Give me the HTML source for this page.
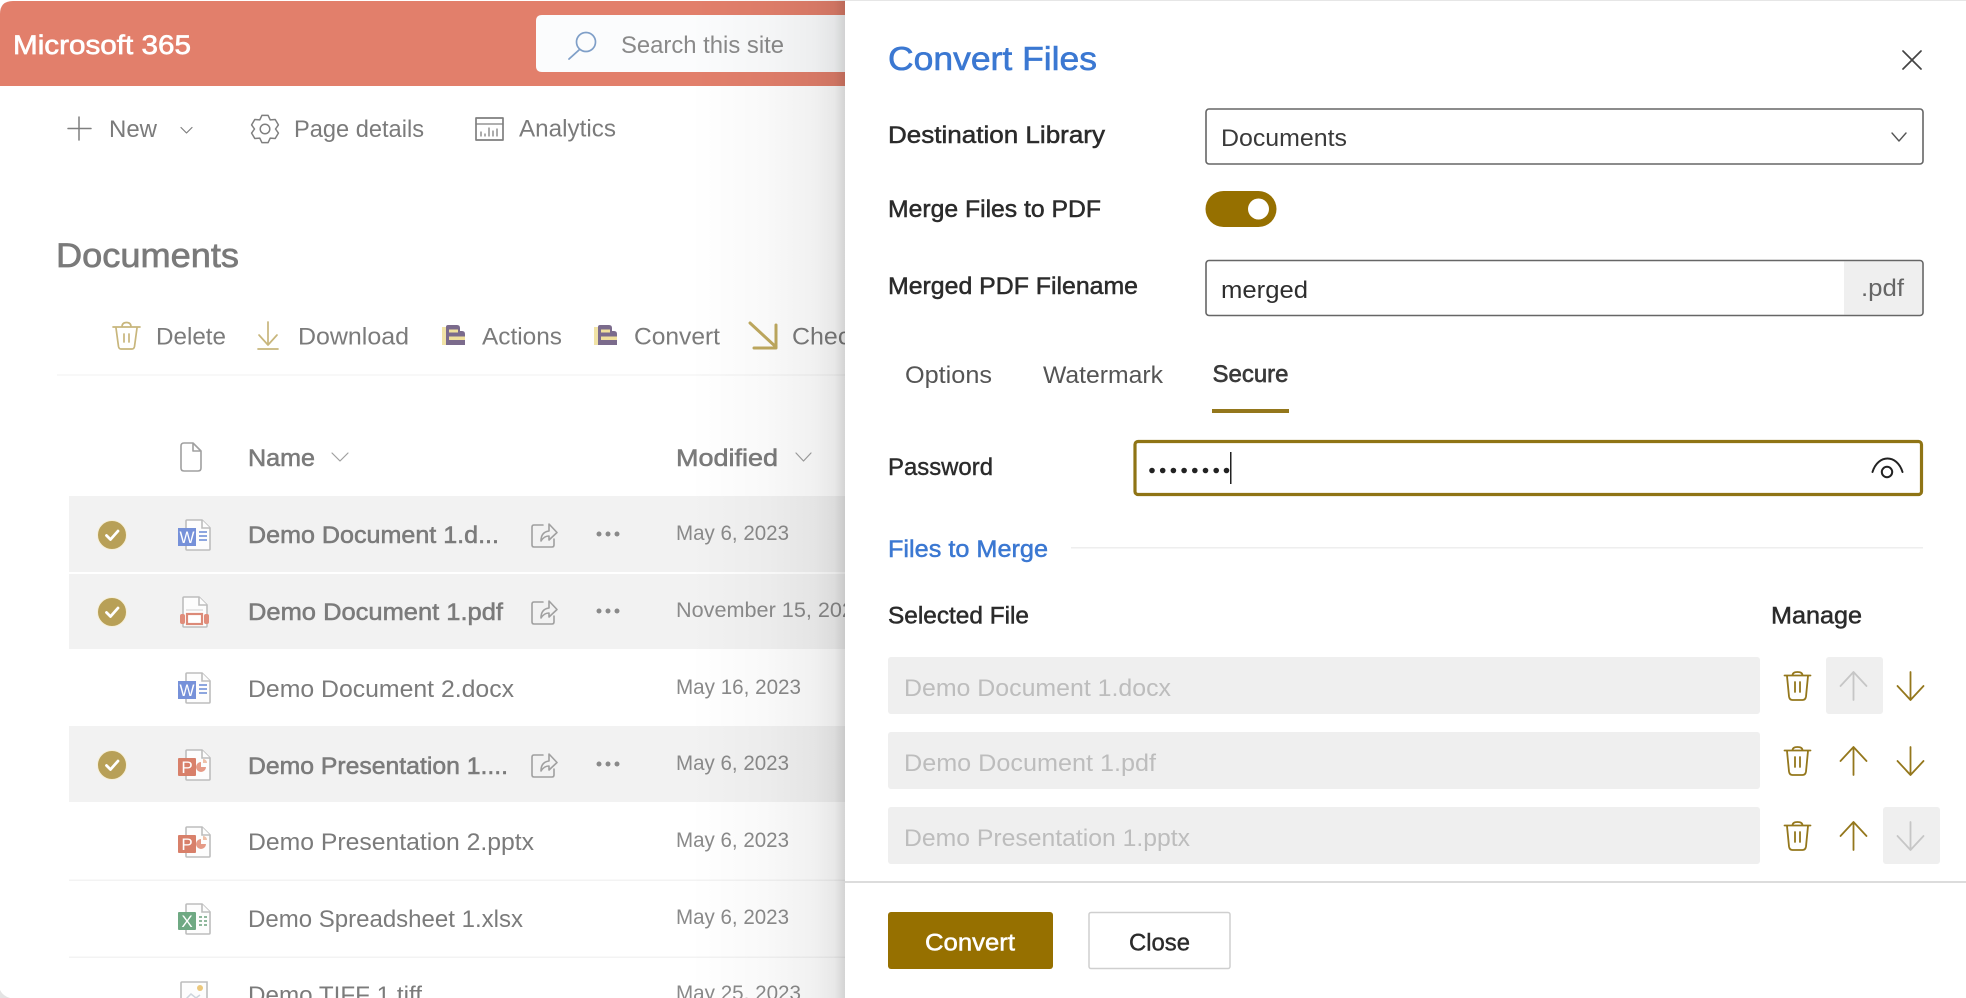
<!DOCTYPE html>
<html lang="en">
<head>
<meta charset="utf-8">
<title>Convert Files</title>
<style>
html,body{margin:0;padding:0;background:#fff;width:1966px;height:998px;overflow:hidden}
svg{display:block;font-family:"Liberation Sans",sans-serif;filter:blur(.3px)}
text{white-space:pre}
.t{fill:#7b7b7b;font-size:24px}
.s{stroke:#7b7b7b;stroke-width:.55px}
.d{fill:#8a8a8a;font-size:21px}
.l{fill:#2b2b2b;font-size:24px;stroke:#2b2b2b;stroke-width:.5px}
.g{fill:#bdbdbd;font-size:24px}
.paper{fill:#fdfdfd;stroke:#bdbdbd;stroke-width:1.6}
.ico{fill:none;stroke:#94771c;stroke-width:1.8;stroke-linecap:round;stroke-linejoin:round}
.off{fill:none;stroke:#c6c6c6;stroke-width:1.8;stroke-linecap:round;stroke-linejoin:round}
.tan{fill:none;stroke:#c8b67c;stroke-width:1.7;stroke-linecap:round;stroke-linejoin:round}
.gr{fill:none;stroke:#7f7f7f;stroke-width:1.5;stroke-linecap:round;stroke-linejoin:round}
.lg{fill:none;stroke:#a0a0a0;stroke-width:1.6;stroke-linecap:round;stroke-linejoin:round}
</style>
</head>
<body>
<svg width="1966" height="998" viewBox="0 0 1966 998" xmlns="http://www.w3.org/2000/svg">
<defs>
<linearGradient id="sh" x1="0" x2="1" y1="0" y2="0">
<stop offset="0" stop-color="#000" stop-opacity="0"/>
<stop offset=".5" stop-color="#000" stop-opacity=".025"/>
<stop offset=".8" stop-color="#000" stop-opacity=".055"/>
<stop offset=".93" stop-color="#000" stop-opacity=".09"/>
<stop offset="1" stop-color="#000" stop-opacity=".17"/>
</linearGradient>
</defs>
<rect width="1966" height="998" fill="#fff"/>
<path d="M0 998V990Q3 996 10 998Z" fill="#e4e4e4"/>

<!-- suite header -->
<path d="M0 86V14Q0 1 13 1H846V86Z" fill="#e27f6b"/>
<text x="13" y="54" font-size="27" fill="#fff" stroke="#fff" stroke-width=".65" textLength="178" lengthAdjust="spacingAndGlyphs">Microsoft 365</text>
<path d="M536 21q0-6 6-6H846V72H542q-6 0-6-6Z" fill="#fbfcfd"/>
<circle cx="586" cy="42" r="9.500" fill="none" stroke="#7f9fc8" stroke-width="1.700"/>
<path d="M579 50L569 59" fill="none" stroke="#7f9fc8" stroke-width="1.800" stroke-linecap="round"/>
<text x="621" y="53" class="t" style="fill:#8a8a8a" textLength="163" lengthAdjust="spacingAndGlyphs">Search this site</text>

<!-- command bar -->
<path d="M79 117V140M68 128.500H91" class="gr"/>
<text x="109" y="137" class="t" textLength="48" lengthAdjust="spacingAndGlyphs">New</text>
<path d="M181 127.500L186.500 133L192 127.500" class="gr" style="stroke-width:1.200"/>
<path d="M261.900 115.400L268.100 115.400L270.250 119.900L275.200 119.450L278.400 124.900L275.500 129L278.400 133.100L275.200 138.550L270.250 138.100L268.100 142.600L261.900 142.600L259.750 138.100L254.800 138.550L251.600 133.100L254.500 129L251.600 124.900L254.800 119.450L259.750 119.900Z" class="gr"/>
<circle cx="265" cy="129" r="4.800" class="gr"/>
<text x="294" y="137" class="t" textLength="130" lengthAdjust="spacingAndGlyphs">Page details</text>
<rect x="476" y="118" width="27" height="22" class="gr" style="stroke-width:1.700"/>
<path d="M476 124H503M481 136V132M485 136V134M489 136V128M493 136V131M497 136V129" class="gr" style="stroke-width:1.300"/>
<text x="519" y="136.500" class="t" textLength="97" lengthAdjust="spacingAndGlyphs">Analytics</text>

<text x="56" y="267" font-size="34" fill="#7a7a7a" stroke="#7a7a7a" stroke-width=".7" textLength="183" lengthAdjust="spacingAndGlyphs">Documents</text>

<!-- action bar -->
<path d="M113 327H140M122 327Q122 322.500 126.500 322.500Q131 322.500 131 327M116 328L118.500 346.500Q119 349 121 349H132Q134 349 134.500 346.500L137 328M124 334V342M129 334V342" class="tan"/>
<text x="156" y="344.500" class="t" textLength="70" lengthAdjust="spacingAndGlyphs">Delete</text>
<path d="M268 322V345M259 335L268 345L277 335M258 349H278" class="tan"/>
<text x="298" y="344.500" class="t" textLength="111" lengthAdjust="spacingAndGlyphs">Download</text>

<rect x="442" y="327" width="4" height="18" fill="#f1e3a6"/>
<path d="M446 327Q446 325 448 325H457Q460 325 460 328V331H462Q465 331 465 334V345H446Z" fill="#7b6b8c"/>
<rect x="449" y="329.500" width="9" height="3" fill="#f0e09c"/>
<rect x="449" y="336.500" width="16" height="3.500" fill="#f0e09c"/>
<text x="482" y="344.500" class="t" textLength="80" lengthAdjust="spacingAndGlyphs">Actions</text>
<rect x="594" y="327" width="4" height="18" fill="#f1e3a6"/>
<path d="M598 327Q598 325 600 325H609Q612 325 612 328V331H614Q617 331 617 334V345H598Z" fill="#7b6b8c"/>
<rect x="601" y="329.500" width="9" height="3" fill="#f0e09c"/>
<rect x="601" y="336.500" width="16" height="3.500" fill="#f0e09c"/>
<text x="634" y="344.500" class="t" textLength="86" lengthAdjust="spacingAndGlyphs">Convert</text>
<path d="M750 323L776 347M776 325V348M754 348H776" fill="none" stroke="#bfa95f" stroke-width="3" stroke-linecap="round"/>
<text x="792" y="344.500" class="t" textLength="118" lengthAdjust="spacingAndGlyphs">Check Out</text>
<rect x="57" y="374.500" width="790" height="1" fill="#f0f0f0"/>

<!-- list header -->
<path d="M181 446Q181 443 184 443H193L201 451V468Q201 471 198 471H184Q181 471 181 468ZM193 443V451H201" class="lg"/>
<text x="248" y="466" class="t s" textLength="67" lengthAdjust="spacingAndGlyphs">Name</text>
<path d="M332 453L340 461L348 453" class="lg" style="stroke-width:1.200"/>
<text x="676" y="466" class="t s" textLength="102" lengthAdjust="spacingAndGlyphs">Modified</text>
<path d="M796 453L803.500 461L811 453" class="lg" style="stroke-width:1.200"/>

<!-- rows -->
<rect x="69" y="496" width="780" height="76" fill="#f2f2f2"/>
<rect x="69" y="574" width="780" height="75" fill="#f2f2f2"/>
<rect x="69" y="726" width="780" height="76" fill="#f2f2f2"/>
<rect x="69" y="879.500" width="780" height="1.500" fill="#f3f3f3"/>
<rect x="69" y="956.500" width="780" height="1.500" fill="#f3f3f3"/>

<!-- check circles -->
<g fill="#b8a057" stroke="#f6efd8" stroke-width="1">
<circle cx="112" cy="535" r="14.500"/><circle cx="112" cy="612" r="14.500"/><circle cx="112" cy="765" r="14.500"/>
</g>
<g fill="none" stroke="#fff" stroke-width="2.800" stroke-linecap="round" stroke-linejoin="round">
<path d="M106.500 535.500L110.500 539.500L118 531"/><path d="M106.500 612.500L110.500 616.500L118 608"/><path d="M106.500 765.500L110.500 769.500L118 761"/>
</g>

<!-- file icons -->
<g transform="translate(177,519)">
<path class="paper" d="M9 2Q9 1 10 1H25L33 9V30Q33 31 32 31H10Q9 31 9 30Z"/><path class="paper" d="M25 1V9H33"/>
<rect x="1" y="9" width="18" height="18" fill="#7691d9"/><path d="M22 13H30M22 17H30M22 21H30" stroke="#8da6df" stroke-width="2"/>
<text x="10" y="24" font-size="17" fill="#fff" text-anchor="middle" textLength="15" lengthAdjust="spacingAndGlyphs">W</text>
</g>
<g transform="translate(177,596)">
<path class="paper" d="M6 2Q6 1 7 1H22L30 9V30Q30 31 29 31H7Q6 31 6 30Z"/><path class="paper" d="M22 1V9H30"/>
<path d="M9 14H26" stroke="#d8d8d8" stroke-width="1.200"/>
<rect x="10" y="18" width="15" height="10" fill="#fff" stroke="#dc8a78" stroke-width="2.200"/>
<rect x="3" y="18" width="5" height="10" rx="2" fill="#e08d7b"/><rect x="27" y="18" width="5" height="10" rx="2" fill="#e08d7b"/>
</g>
<g transform="translate(177,672)">
<path class="paper" d="M9 2Q9 1 10 1H25L33 9V30Q33 31 32 31H10Q9 31 9 30Z"/><path class="paper" d="M25 1V9H33"/>
<rect x="1" y="9" width="18" height="18" fill="#7691d9"/><path d="M22 13H30M22 17H30M22 21H30" stroke="#8da6df" stroke-width="2"/>
<text x="10" y="24" font-size="17" fill="#fff" text-anchor="middle" textLength="15" lengthAdjust="spacingAndGlyphs">W</text>
</g>
<g transform="translate(177,749)">
<path class="paper" d="M9 2Q9 1 10 1H25L33 9V30Q33 31 32 31H10Q9 31 9 30Z"/><path class="paper" d="M25 1V9H33"/>
<rect x="1" y="9" width="18" height="18" rx="1" fill="#d8806a"/>
<path d="M24 13v5h5a5 5 0 1 1-5-5Z" fill="#e59a86"/><path d="M26 10a4 4 0 0 1 4 4h-4Z" fill="#eec0a8"/>
<text x="10" y="24" font-size="17" fill="#fff" text-anchor="middle">P</text>
</g>
<g transform="translate(177,826)">
<path class="paper" d="M9 2Q9 1 10 1H25L33 9V30Q33 31 32 31H10Q9 31 9 30Z"/><path class="paper" d="M25 1V9H33"/>
<rect x="1" y="9" width="18" height="18" rx="1" fill="#d8806a"/>
<path d="M24 13v5h5a5 5 0 1 1-5-5Z" fill="#e59a86"/><path d="M26 10a4 4 0 0 1 4 4h-4Z" fill="#eec0a8"/>
<text x="10" y="24" font-size="17" fill="#fff" text-anchor="middle">P</text>
</g>
<g transform="translate(177,903)">
<path class="paper" d="M9 2Q9 1 10 1H25L33 9V30Q33 31 32 31H10Q9 31 9 30Z"/><path class="paper" d="M25 1V9H33"/>
<rect x="1" y="9" width="18" height="18" rx="1" fill="#6fa983"/>
<path d="M22 14H25M27 14H30M22 18H25M27 18H30M22 22H25M27 22H30" stroke="#8fb89c" stroke-width="2"/>
<text x="10" y="24" font-size="17" fill="#fff" text-anchor="middle">X</text>
</g>
<g transform="translate(180,981)">
<path class="paper" d="M1 2Q1 1 2 1H27V30H1Z"/>
<circle cx="20" cy="7" r="3" fill="#ecc87c"/>
<path d="M5 19L11 13L16 17L20 14" fill="none" stroke="#cdd5dd" stroke-width="1.500"/>
</g>

<!-- names -->
<text x="248" y="543" class="t s" textLength="251" lengthAdjust="spacingAndGlyphs">Demo Document 1.d...</text>
<text x="248" y="620" class="t s" textLength="255" lengthAdjust="spacingAndGlyphs">Demo Document 1.pdf</text>
<text x="248" y="697" class="t" textLength="266" lengthAdjust="spacingAndGlyphs">Demo Document 2.docx</text>
<text x="248" y="774" class="t s" textLength="260" lengthAdjust="spacingAndGlyphs">Demo Presentation 1....</text>
<text x="248" y="850" class="t" textLength="286" lengthAdjust="spacingAndGlyphs">Demo Presentation 2.pptx</text>
<text x="248" y="927" class="t" textLength="275" lengthAdjust="spacingAndGlyphs">Demo Spreadsheet 1.xlsx</text>
<text x="248" y="1003" class="t" textLength="174" lengthAdjust="spacingAndGlyphs">Demo TIFF 1.tiff</text>

<!-- share + dots -->
<g class="lg">
<path d="M543 525H534Q532 525 532 527V545Q532 547 534 547H552Q554 547 554 545V539M541 541Q541 532 549 531V524L557 532.500L549 540V536Q544 536 541 541Z"/>
<path d="M543 602H534Q532 602 532 604V622Q532 624 534 624H552Q554 624 554 622V616M541 618Q541 609 549 608V601L557 609.500L549 617V613Q544 613 541 618Z"/>
<path d="M543 755H534Q532 755 532 757V775Q532 777 534 777H552Q554 777 554 775V769M541 771Q541 762 549 761V754L557 762.500L549 770V766Q544 766 541 771Z"/>
</g>
<g fill="#8a8a8a">
<circle cx="599" cy="534" r="2.500"/><circle cx="608" cy="534" r="2.500"/><circle cx="617" cy="534" r="2.500"/>
<circle cx="599" cy="611" r="2.500"/><circle cx="608" cy="611" r="2.500"/><circle cx="617" cy="611" r="2.500"/>
<circle cx="599" cy="764" r="2.500"/><circle cx="608" cy="764" r="2.500"/><circle cx="617" cy="764" r="2.500"/>
</g>

<!-- dates -->
<text x="676" y="540" class="d" textLength="113" lengthAdjust="spacingAndGlyphs">May 6, 2023</text>
<text x="676" y="617" class="d" textLength="190" lengthAdjust="spacingAndGlyphs">November 15, 2023</text>
<text x="676" y="694" class="d" textLength="125" lengthAdjust="spacingAndGlyphs">May 16, 2023</text>
<text x="676" y="770" class="d" textLength="113" lengthAdjust="spacingAndGlyphs">May 6, 2023</text>
<text x="676" y="847" class="d" textLength="113" lengthAdjust="spacingAndGlyphs">May 6, 2023</text>
<text x="676" y="924" class="d" textLength="113" lengthAdjust="spacingAndGlyphs">May 6, 2023</text>
<text x="676" y="1000" class="d" textLength="125" lengthAdjust="spacingAndGlyphs">May 25, 2023</text>

<!-- panel shadow -->
<rect x="690" y="0" width="155" height="998" fill="url(#sh)"/>

<!-- panel -->
<rect x="845" y="0" width="1121" height="998" fill="#fff"/>
<rect x="845" y="0" width="1121" height="1" fill="#e6e6e6"/>

<text x="888" y="70" font-size="33" fill="#3b78d2" stroke="#3b78d2" stroke-width=".6" textLength="209" lengthAdjust="spacingAndGlyphs">Convert Files</text>
<path d="M1903 51L1921 69M1921 51L1903 69" fill="none" stroke="#444" stroke-width="1.700" stroke-linecap="round"/>

<text x="888" y="143" class="l" textLength="217" lengthAdjust="spacingAndGlyphs">Destination Library</text>
<rect x="1206" y="109" width="717" height="55" rx="3" fill="#fff" stroke="#666" stroke-width="1.600"/>
<text x="1221" y="146" font-size="24" fill="#3a3a3a" textLength="126" lengthAdjust="spacingAndGlyphs">Documents</text>
<path d="M1892 133L1899 141L1906 133" fill="none" stroke="#555" stroke-width="1.400" stroke-linecap="round" stroke-linejoin="round"/>

<text x="888" y="217" class="l" textLength="213" lengthAdjust="spacingAndGlyphs">Merge Files to PDF</text>
<rect x="1205.500" y="191" width="71" height="36" rx="18" fill="#967000"/>
<circle cx="1258.500" cy="209" r="10.500" fill="#fff"/>

<text x="888" y="294" class="l" textLength="250" lengthAdjust="spacingAndGlyphs">Merged PDF Filename</text>
<rect x="1206" y="260.500" width="717" height="55" rx="3" fill="#fff" stroke="#666" stroke-width="1.600"/>
<path d="M1844 261.500H1920Q1922 261.500 1922 263.500V312.500Q1922 314.500 1920 314.500H1844Z" fill="#efefef"/>
<text x="1221" y="298" font-size="24" fill="#2e2e2e" textLength="87" lengthAdjust="spacingAndGlyphs">merged</text>
<text x="1861" y="296" font-size="24" fill="#666" textLength="43" lengthAdjust="spacingAndGlyphs">.pdf</text>

<text x="905" y="383" font-size="24" fill="#555" textLength="87" lengthAdjust="spacingAndGlyphs">Options</text>
<text x="1043" y="383" font-size="24" fill="#555" textLength="120" lengthAdjust="spacingAndGlyphs">Watermark</text>
<text x="1212.500" y="382" font-size="24" fill="#3a3a3a" stroke="#3a3a3a" stroke-width=".65" textLength="76" lengthAdjust="spacingAndGlyphs">Secure</text>
<rect x="1212" y="409" width="77" height="4" fill="#94771c"/>

<text x="888" y="475" font-size="24" fill="#2b2b2b" stroke="#2b2b2b" stroke-width=".4" textLength="105" lengthAdjust="spacingAndGlyphs">Password</text>
<rect x="1135" y="441.500" width="786.500" height="53" rx="3" fill="#fff" stroke="#8f7415" stroke-width="3.200"/>
<g fill="#222">
<circle cx="1152" cy="470.500" r="2.800"/><circle cx="1162.700" cy="470.500" r="2.800"/><circle cx="1173.400" cy="470.500" r="2.800"/><circle cx="1184.100" cy="470.500" r="2.800"/><circle cx="1194.800" cy="470.500" r="2.800"/><circle cx="1205.500" cy="470.500" r="2.800"/><circle cx="1216.200" cy="470.500" r="2.800"/><circle cx="1226.500" cy="470.500" r="2.800"/>
</g>
<rect x="1230" y="452" width="1.500" height="32" fill="#222"/>
<path d="M1872.500 472C1878 454 1897 454 1902.500 472" fill="none" stroke="#222" stroke-width="2" stroke-linecap="round"/>
<circle cx="1887" cy="472" r="5.200" fill="none" stroke="#222" stroke-width="2"/>

<text x="888" y="557" font-size="24" fill="#3b78d2" stroke="#3b78d2" stroke-width=".5" textLength="160" lengthAdjust="spacingAndGlyphs">Files to Merge</text>
<rect x="1071" y="547" width="852" height="1.500" fill="#eeeeee"/>

<text x="888" y="623.500" class="l" textLength="141" lengthAdjust="spacingAndGlyphs">Selected File</text>
<text x="1771" y="623.500" class="l" textLength="91" lengthAdjust="spacingAndGlyphs">Manage</text>

<rect x="888" y="657" width="872" height="57" rx="3" fill="#efefef"/>
<rect x="888" y="732" width="872" height="57" rx="3" fill="#efefef"/>
<rect x="888" y="807" width="872" height="57" rx="3" fill="#efefef"/>
<text x="904" y="696" class="g" textLength="267" lengthAdjust="spacingAndGlyphs">Demo Document 1.docx</text>
<text x="904" y="771" class="g" textLength="252" lengthAdjust="spacingAndGlyphs">Demo Document 1.pdf</text>
<text x="904" y="846" class="g" textLength="286" lengthAdjust="spacingAndGlyphs">Demo Presentation 1.pptx</text>

<rect x="1826" y="657" width="57" height="57" rx="3" fill="#efefef"/>
<rect x="1883" y="807" width="57" height="57" rx="3" fill="#efefef"/>

<path class="ico" d="M1784.500 675.500H1810.500M1792.500 675.500Q1792.500 672 1797.500 672Q1802.500 672 1802.500 675.500M1787 676L1789 696.500Q1789.500 700 1792.500 700H1802.500Q1805.500 700 1806 696.500L1808 676M1795 682V692M1800 682V692"/>
<path class="ico" d="M1784.500 750.500H1810.500M1792.500 750.500Q1792.500 747 1797.500 747Q1802.500 747 1802.500 750.500M1787 751L1789 771.500Q1789.500 775 1792.500 775H1802.500Q1805.500 775 1806 771.500L1808 751M1795 757V767M1800 757V767"/>
<path class="ico" d="M1784.500 825.500H1810.500M1792.500 825.500Q1792.500 822 1797.500 822Q1802.500 822 1802.500 825.500M1787 826L1789 846.500Q1789.500 850 1792.500 850H1802.500Q1805.500 850 1806 846.500L1808 826M1795 832V842M1800 832V842"/>

<path class="off" d="M1853.500 700V672M1840.500 686L1853.500 672L1866.500 686"/>
<path class="ico" d="M1853.500 775V747M1840.500 761L1853.500 747L1866.500 761"/>
<path class="ico" d="M1853.500 850V822M1840.500 836L1853.500 822L1866.500 836"/>
<path class="ico" d="M1910.500 672V700M1897.500 686L1910.500 700L1923.500 686"/>
<path class="ico" d="M1910.500 747V775M1897.500 761L1910.500 775L1923.500 761"/>
<path class="off" d="M1910.500 822V850M1897.500 836L1910.500 850L1923.500 836"/>

<rect x="845" y="881" width="1121" height="2" fill="#dcdcdc"/>
<rect x="888" y="912" width="165" height="57" rx="3" fill="#967000"/>
<text x="925" y="950.500" font-size="24" fill="#fff" stroke="#fff" stroke-width=".5" textLength="90" lengthAdjust="spacingAndGlyphs">Convert</text>
<rect x="1089" y="912.500" width="141" height="56" rx="2" fill="#fff" stroke="#cfcfcf" stroke-width="1.500"/>
<text x="1129" y="950.500" font-size="24" fill="#2b2b2b" stroke="#2b2b2b" stroke-width=".4" textLength="61" lengthAdjust="spacingAndGlyphs">Close</text>
</svg>
</body>
</html>
